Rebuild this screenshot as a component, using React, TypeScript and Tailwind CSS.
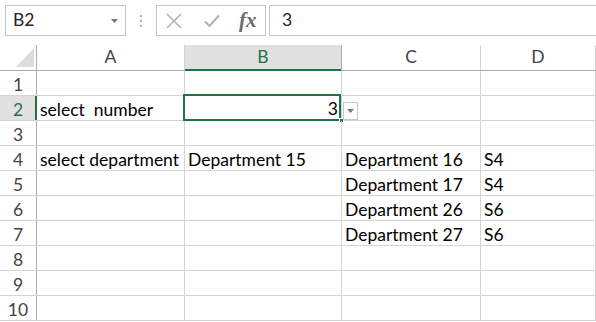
import React from "react";

const cols = [
  { key: "A", w: "w-[148px]" },
  { key: "B", w: "w-[157px]" },
  { key: "C", w: "w-[139px]" },
  { key: "D", w: "w-[115px]" },
];

const data: Record<number, string[]> = {
  2: ["select  number", "", "", ""],
  4: ["select department", "Department 15", "Department 16", "S4"],
  5: ["", "", "Department 17", "S4"],
  6: ["", "", "Department 26", "S6"],
  7: ["", "", "Department 27", "S6"],
};

export default function App() {
  const font = { fontFamily: "Lato, 'Noto Sans', sans-serif" };
  return (
    <div className="w-[596px] h-[322px] bg-white overflow-hidden text-[17.5px] text-black" style={font}>
      {/* formula bar */}
      <div className="h-[45px] flex items-start pt-[5px] pl-[5px]">
        <div className="w-[121px] h-[31px] border border-[#c6c6c6] flex items-center justify-between pl-[7px] pr-[7px]">
          <span className="text-[#222]">B2</span>
          <svg width="7" height="4" viewBox="0 0 7 4"><path d="M0 0h7L3.5 4z" fill="#777" /></svg>
        </div>
        <div className="w-[30px] h-[31px] flex flex-col items-center justify-center gap-[3px]">
          <span className="w-[2px] h-[2px] bg-[#b0b0b0]" />
          <span className="w-[2px] h-[2px] bg-[#b0b0b0]" />
          <span className="w-[2px] h-[2px] bg-[#b0b0b0]" />
        </div>
        <div className="w-[110px] h-[31px] border border-[#c6c6c6] flex items-center">
          <svg className="ml-[9px]" width="16" height="16" viewBox="0 0 16 16">
            <path d="M1 1L15 15M15 1L1 15" stroke="#b3b3b3" strokeWidth="1.6" />
          </svg>
          <svg className="ml-[22px]" width="16" height="14" viewBox="0 0 16 14">
            <path d="M1 7.5L5.5 12L15 1.5" stroke="#b3b3b3" strokeWidth="2.2" fill="none" />
          </svg>
          <span
            className="ml-[19px] text-[21px] italic font-bold text-[#6b6b6b] leading-none"
            style={{ fontFamily: "'Liberation Serif', serif" }}
          >
            fx
          </span>
        </div>
        <div className="ml-[3px] flex-1 h-[31px] border border-r-0 border-[#c6c6c6] flex items-center pl-[12px] text-[#222]">
          3
        </div>
      </div>

      {/* header row */}
      <div className="flex h-[26px] border-b border-[#ababab]">
        <div className="w-[37px] h-full border-r border-[#ababab] relative">
          <svg className="absolute left-[16px] top-[3px]" width="18" height="19" viewBox="0 0 18 19">
            <path d="M18 0V19H0z" fill="#dcdcdc" />
          </svg>
        </div>
        {cols.map((c) => (
          <div
            key={c.key}
            className={`${c.w} h-full flex items-center justify-center border-r ${
              c.key === "B"
                ? "bg-[#e1e1e1] text-[#217346] border-[#ababab] relative"
                : "text-[#444] border-[#d4d4d4]"
            }`}
          >
            {c.key}
            {c.key === "B" && (
              <div className="absolute left-0 right-0 bottom-[-1px] h-[2px] bg-[#217346]" />
            )}
          </div>
        ))}
        <div className="flex-1" />
      </div>

      {/* rows */}
      {Array.from({ length: 10 }, (_, i) => i + 1).map((r) => (
        <div key={r} className="flex h-[25px] border-b border-[#d4d4d4]">
          <div
            className={`w-[37px] h-full flex items-end pb-[0px] justify-center border-r border-[#ababab] relative leading-none ${
              r === 2 ? "bg-[#e1e1e1] text-[#217346]" : "text-[#444]"
            }`}
          >
            <span className="mb-[2px]">{r}</span>
            {r === 2 && <div className="absolute top-0 bottom-0 right-[-1px] w-[2px] bg-[#217346]" />}
          </div>
          {cols.map((c, ci) => {
            const v = data[r]?.[ci] ?? "";
            const sel = r === 2 && c.key === "B";
            return (
              <div
                key={c.key}
                className={`${c.w} h-full border-r border-[#d4d4d4] relative flex items-end pl-[3px] whitespace-pre leading-none`}
              >
                <span className="mb-[2px]">{v}</span>
                {sel && (
                  <>
                    <div className="absolute left-[-2px] top-[-2px] w-[158px] h-[27px] border-2 border-[#217346] flex items-end justify-end pr-[1px] pb-[2px] leading-none">
                      3
                    </div>
                    <div className="absolute right-[-3px] bottom-[-3px] w-[5px] h-[5px] bg-[#217346] border border-white" />
                    <div className="absolute left-[158px] top-[6px] w-[15px] h-[18px] border border-[#c6c6c6] bg-white flex items-center justify-center z-10">
                      <svg width="7" height="4" viewBox="0 0 7 4"><path d="M0 0h7L3.5 4z" fill="#777" /></svg>
                    </div>
                  </>
                )}
              </div>
            );
          })}
          <div className="flex-1" />
        </div>
      ))}
    </div>
  );
}
